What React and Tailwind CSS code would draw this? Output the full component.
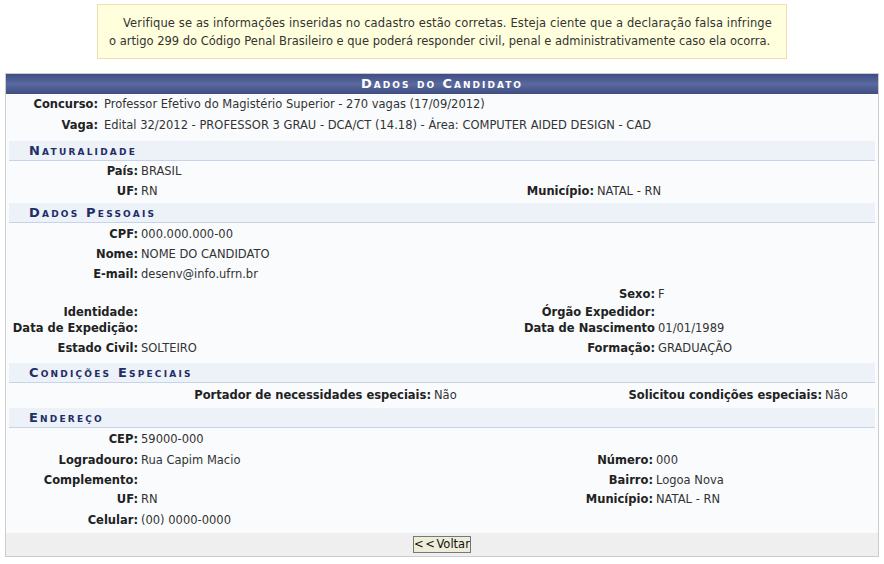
const concursoRows = [
  ['Concurso:', 'Professor Efetivo do Magistério Superior - 270 vagas (17/09/2012)', 'h-[18px]'],
  ['Vaga:', 'Edital 32/2012 - PROFESSOR 3 GRAU - DCA/CT (14.18) - Área: COMPUTER AIDED DESIGN - CAD', 'h-[26px]'],
];

function SectionTitle({ children }) {
  return (
    <div className="mx-[3px] h-[20px] flex items-center pl-[20px] bg-[#edf1f8] border-b border-[#c6d3e8] text-[#222d66] font-bold [font-variant:small-caps] tracking-[2.2px] text-[13px]">
      {children}
    </div>
  );
}

function Row({ cols, h, l1, v1, l2, v2 }) {
  return (
    <div className={`grid items-center pt-[2px] leading-[13px] ${cols} ${h}`}>
      <div className="text-right font-bold text-[11.5px] text-[#222] whitespace-nowrap">{l1}</div>
      <div className="pl-[3px] text-[#333] whitespace-nowrap">{v1}</div>
      <div className="text-right font-bold text-[11.5px] text-[#222] whitespace-nowrap">{l2}</div>
      <div className="pl-[3px] text-[#333] whitespace-nowrap">{v2}</div>
    </div>
  );
}

export default function App() {
  const nat = 'grid-cols-[132px_300px_156px_1fr]';
  const pes = 'grid-cols-[132px_300px_217px_1fr]';
  const esp = 'grid-cols-[425px_150px_241px_1fr]';
  const end = 'grid-cols-[132px_300px_215px_1fr]';

  return (
    <div className="min-h-[564px] bg-white font-['DejaVu_Sans',sans-serif] text-[11.5px] text-[#222] pt-[4px]">
      <div className="ml-[97px] w-[690px] bg-[#ffffdd] border border-[#f3dcb0] pl-[11px] pt-[9px] pb-[8px] leading-[18px] text-[11.5px] text-[#333] whitespace-nowrap">
        <span className="pl-[14px] tracking-[0.13px]">Verifique se as informações inseridas no cadastro estão corretas. Esteja ciente que a declaração falsa infringe</span>
        <br />o artigo 299 do Código Penal Brasileiro e que poderá responder civil, penal e administrativamente caso ela ocorra.
      </div>

      <div className="ml-[5px] mt-[14px] w-[874px] border border-[#cccccc] bg-[#f9fbfd]">
        <div className="h-[20px] flex items-center justify-center bg-gradient-to-b from-[#3e4d83] via-[#5a6a9f] to-[#3f4d82] text-white font-bold [font-variant:small-caps] tracking-[2px] text-[13px]">
          Dados do Candidato
        </div>

        {concursoRows.map(([l, v, h]) => (
          <div key={l} className={`grid grid-cols-[92px_1fr] items-center pt-[2px] ${h}`}>
            <div className="text-right font-bold text-[11.5px] text-[#222]">{l}</div>
            <div className="pl-[6px] text-[#333] whitespace-nowrap">{v}</div>
          </div>
        ))}

        <div className="mt-[3px]">
          <SectionTitle>Naturalidade</SectionTitle>
          <Row cols={nat} h="h-[19px]" l1="País:" v1="BRASIL" />
          <Row cols={nat} h="h-[20px]" l1="UF:" v1="RN" l2="Município:" v2="NATAL - RN" />
        </div>

        <div className="mt-[3px]">
          <SectionTitle>Dados Pessoais</SectionTitle>
          <Row cols={pes} h="h-[20px]" l1="CPF:" v1="000.000.000-00" />
          <Row cols={pes} h="h-[21px]" l1="Nome:" v1="NOME DO CANDIDATO" />
          <Row cols={pes} h="h-[19px]" l1="E-mail:" v1="desenv@info.ufrn.br" />
          <Row cols={pes} h="h-[20px]" l2="Sexo:" v2="F" />
          <Row cols={pes} h="h-[16px]" l1="Identidade:" l2="Órgão Expedidor:" />
          <Row cols={pes} h="h-[16px]" l1="Data de Expedição:" l2="Data de Nascimento" v2="01/01/1989" />
          <Row cols={pes} h="h-[25px]" l1="Estado Civil:" v1="SOLTEIRO" l2="Formação:" v2="GRADUAÇÃO" />
        </div>

        <div className="mt-[3px]">
          <SectionTitle>Condições Especiais</SectionTitle>
          <Row cols={esp} h="h-[22px]" l1="Portador de necessidades especiais:" v1="Não" l2="Solicitou condições especiais:" v2="Não" />
        </div>

        <div className="mt-[3px]">
          <SectionTitle>Endereço</SectionTitle>
          <Row cols={end} h="h-[20px]" l1="CEP:" v1="59000-000" />
          <Row cols={end} h="h-[22px]" l1="Logradouro:" v1="Rua Capim Macio" l2="Número:" v2="000" />
          <Row cols={end} h="h-[18px]" l1="Complemento:" l2="Bairro:" v2="Logoa Nova" />
          <Row cols={end} h="h-[20px]" l1="UF:" v1="RN" l2="Município:" v2="NATAL - RN" />
          <Row cols={end} h="h-[22px]" l1="Celular:" v1="(00) 0000-0000" />
        </div>

        <div className="mt-[3px] h-[23px] bg-[#efefef] flex items-center justify-center">
          <button className="h-[17px] w-[58px] bg-[#eeedda] border border-[#777] text-[#111] text-[11.5px] leading-none">
            <span className="tracking-[1.5px]">&lt;&lt;</span>Voltar
          </button>
        </div>
      </div>
    </div>
  );
}
